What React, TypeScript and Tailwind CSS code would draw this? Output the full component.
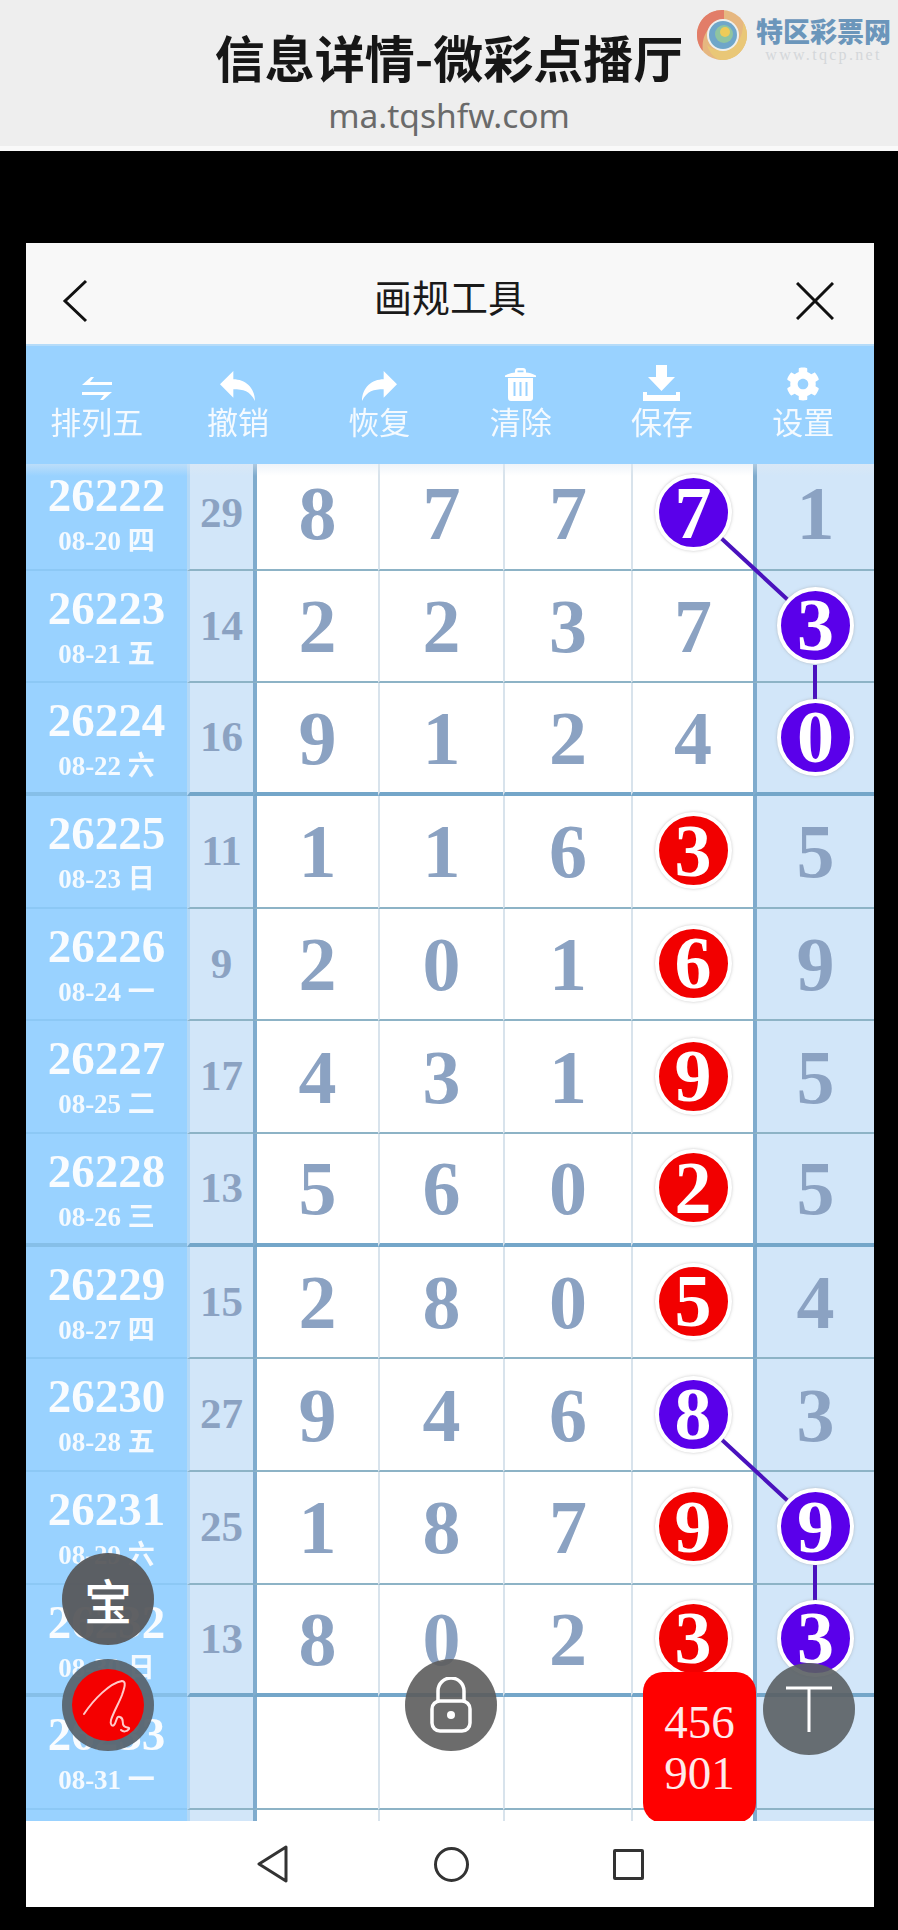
import { FaCog } from "react-icons/fa";

type Tone = "red" | "purple";

type Draw = {
  issue: string;
  date: string;
  sum: string;
  nums: string[];
  marks?: Record<number, Tone>;
};

const serif = "font-['Liberation_Serif','Noto_Sans_CJK_SC',serif]";

const draws: Draw[] = [
  { issue: "26222", date: "08-20 四", sum: "29", nums: ["8", "7", "7", "7", "1"], marks: { 3: "purple" } },
  { issue: "26223", date: "08-21 五", sum: "14", nums: ["2", "2", "3", "7", "3"], marks: { 4: "purple" } },
  { issue: "26224", date: "08-22 六", sum: "16", nums: ["9", "1", "2", "4", "0"], marks: { 4: "purple" } },
  { issue: "26225", date: "08-23 日", sum: "11", nums: ["1", "1", "6", "3", "5"], marks: { 3: "red" } },
  { issue: "26226", date: "08-24 一", sum: "9", nums: ["2", "0", "1", "6", "9"], marks: { 3: "red" } },
  { issue: "26227", date: "08-25 二", sum: "17", nums: ["4", "3", "1", "9", "5"], marks: { 3: "red" } },
  { issue: "26228", date: "08-26 三", sum: "13", nums: ["5", "6", "0", "2", "5"], marks: { 3: "red" } },
  { issue: "26229", date: "08-27 四", sum: "15", nums: ["2", "8", "0", "5", "4"], marks: { 3: "red" } },
  { issue: "26230", date: "08-28 五", sum: "27", nums: ["9", "4", "6", "8", "3"], marks: { 3: "purple" } },
  { issue: "26231", date: "08-29 六", sum: "25", nums: ["1", "8", "7", "9", "9"], marks: { 3: "red", 4: "purple" } },
  { issue: "26232", date: "08-30 日", sum: "13", nums: ["8", "0", "2", "3", "3"], marks: { 3: "red", 4: "purple" } },
  { issue: "26233", date: "08-31 一", sum: "", nums: ["", "", "", "", ""] },
  { issue: "", date: "", sum: "", nums: ["", "", "", "", ""] },
];

// rows that close a group get a heavier rule
const heavyRows = [2, 6, 10];

function SwapIcon() {
  return (
    <svg width="30" height="25" viewBox="0 0 30 25" fill="currentColor">
      <path d="M0 9L9 1h3L8 6h22v3z" />
      <path d="M30 16l-9 8h-3l4-5H0v-3z" />
    </svg>
  );
}

function ReplyIcon({ flip }: { flip?: boolean }) {
  return (
    <svg width="35" height="30" viewBox="0 0 105 90" fill="currentColor" className={flip ? "-scale-x-100" : ""}>
      <path d="M0 40L40 0v25c35 0 65 25 65 65-15-30-35-35-65-35v25z" />
    </svg>
  );
}

function TrashIcon() {
  return (
    <svg width="31" height="33" viewBox="0 0 31 33" fill="currentColor">
      <path d="M0 7.500C4 5.500 7 5 10 4.600V3a3 3 0 0 1 3-3h5a3 3 0 0 1 3 3v1.600C24 5 27 5.500 31 7.500v1.500H0zM12.500 4.300h6V2.500h-6z" />
      <path d="M3 10h25v20a3 3 0 0 1-3 3H6a3 3 0 0 1-3-3z" />
      <path d="M9.500 14v14M15.500 14v14M21.500 14v14" stroke="#99d2ff" strokeWidth="2" />
    </svg>
  );
}

function SaveIcon() {
  return (
    <svg width="37" height="36" viewBox="0 0 37 36" fill="currentColor">
      <path d="M13 0h11v12h8L18.500 26 5 12h8z" />
      <path d="M0 27h4v3h29v-3h4v9H0z" />
    </svg>
  );
}

const tools = [
  { label: "排列五", icon: <SwapIcon /> },
  { label: "撤销", icon: <ReplyIcon /> },
  { label: "恢复", icon: <ReplyIcon flip /> },
  { label: "清除", icon: <TrashIcon /> },
  { label: "保存", icon: <SaveIcon /> },
  { label: "设置", icon: <FaCog size={34} /> },
];

function Swirl() {
  return (
    <svg width="52" height="52" viewBox="0 0 52 52" className="blur-[0.7px]">
      <circle cx="26" cy="26" r="25" fill="#e6b780" />
      <path d="M28 1C12 0 1 12 1 26c0 6 2 12 6 16-2-14 5-28 21-30z" fill="#e27d68" />
      <path d="M25 51c14 1 26-11 26-25 0-5-2-10-4-13 1 15-7 27-22 28-6 0-11-2-14-5 3 9 8 14 14 15z" fill="#e9c777" />
      <circle cx="27" cy="26" r="16" fill="#eef0ee" />
      <circle cx="27" cy="26" r="14" fill="#6fa6c9" />
      <circle cx="28" cy="25" r="9" fill="#8fc4a0" />
      <circle cx="29" cy="23" r="5" fill="#eecb58" />
    </svg>
  );
}

function Ball({ value, tone }: { value: string; tone: Tone }) {
  const bg = tone === "red" ? "bg-[#f20000]" : "bg-[#5a00ea]";
  return (
    <div
      className={`relative z-10 -mt-[1px] flex h-[77px] w-[77px] items-center justify-center rounded-full border-4 border-white text-[74px] font-bold leading-none text-white shadow-[0_0_3px_rgba(140,140,140,0.5)] ${bg}`}
    >
      {value}
    </div>
  );
}

function Row({ draw, heavy }: { draw: Draw; heavy: boolean }) {
  const rule = heavy ? "border-b-4 border-b-[#74a6c9]" : "border-b-2 border-b-[#8db3c6]";
  return (
    <div className={`grid h-[112.67px] grid-cols-[161px_66px_125px_125px_128px_122px_121px] ${serif}`}>
      <div
        className={`flex flex-col items-center bg-[#99d2ff] pt-[17px] text-white ${
          heavy ? "border-b-4 border-b-[#86bfe8]" : "border-b-2 border-b-[#8cc8f5]"
        }`}
      >
        <div className="text-[47px] font-bold leading-[40px] opacity-95">{draw.issue}</div>
        <div className="mt-[10px] text-[27px] font-bold leading-[32px] opacity-90">{draw.date}</div>
      </div>
      <div
        className={`flex items-center justify-center border-l-[3px] border-l-[#b3d8f6] bg-[#d2e6f9] text-[43px] font-bold text-[#8ba2c2] ${rule}`}
      >
        {draw.sum}
      </div>
      {draw.nums.map((n, i) => {
        const tone = draw.marks?.[i];
        return (
          <div
            key={i}
            className={`flex items-center justify-center text-[76px] font-bold leading-none text-[#8ba2c2] ${rule} ${
              i === 4 ? "border-l-4 border-l-[#7fabcd] bg-[#d2e6f9]" : "bg-white"
            } ${i === 0 ? "border-l-4 border-l-[#7fabcd]" : ""} ${
              i > 0 && i < 4 ? "border-l-2 border-l-[#d8e3ec]" : ""
            }`}
          >
            {tone ? <Ball value={n} tone={tone} /> : n}
          </div>
        );
      })}
    </div>
  );
}

function SignatureMark() {
  return (
    <svg width="72" height="72" viewBox="0 0 72 72" fill="none" stroke="#ffc9c9" strokeWidth="2" strokeLinecap="round" strokeLinejoin="round">
      <path d="M12 45C22 30 38 14 50 12c5 0 2 8 0 14-3 8-8 16-11 25-1 4 1 7 3 5 3-3 2-10 6-8 5 2 1 6 4 9 2 2 6 1 5 3-2 3-6 3-8 1" />
    </svg>
  );
}

export default function App() {
  return (
    <div className="relative h-[1930px] w-[898px] overflow-hidden bg-black">
      {/* page caption */}
      <div className="relative h-[151px] border-b-[5px] border-b-[#f9f9f9] bg-[#eeeeee] text-center">
        <div className="mx-auto w-fit pt-[24px] font-['Noto_Sans_CJK_SC',sans-serif] text-[50px] font-bold leading-[64px] text-[#161616]">
          信息详情-微彩点播厅
        </div>
        <div className="pt-[2px] font-['Noto_Sans',sans-serif] text-[33.500px] leading-[50px] text-[#6a6a6a]">ma.tqshfw.com</div>

        <div className="absolute left-[696px] top-[9px] flex gap-[8px]">
          <Swirl />
          <div className="pt-[8px]">
            <div className="font-['Noto_Sans_CJK_SC',sans-serif] text-[27px] font-black leading-[28px] text-[#6b96bb]">
              特区彩票网
            </div>
            <div className="mt-[2px] font-['Liberation_Serif',serif] text-[16px] leading-[16px] tracking-[2.3px] text-[#d4d7da]">
              www.tqcp.net
            </div>
          </div>
        </div>
      </div>

      {/* tool window */}
      <div className="ml-[26px] mt-[92px] flex h-[1664px] w-[848px] flex-col bg-white">
        <div className="flex h-[101px] items-center bg-[#f8f8f8] pl-[36px] pr-[40px]">
          <div className="w-[38px]">
            <svg width="26" height="44" viewBox="0 0 26 44" fill="none" stroke="#111" strokeWidth="3" className="mt-[14px]">
              <path d="M24 2L3 22l21 20" />
            </svg>
          </div>
          <div className="ml-[4px] mt-[4px] flex-1 text-center font-['Noto_Sans_CJK_SC',sans-serif] text-[38px] leading-[50px] text-[#1a1a1a]">
            画规工具
          </div>
          <svg width="38" height="38" viewBox="0 0 38 38" fill="none" stroke="#111" strokeWidth="3" className="mt-[14px]">
            <path d="M1 1l36 36M37 1L1 37" />
          </svg>
        </div>

        <div className="grid h-[120px] grid-cols-6 border-t-2 border-t-[#b6dcf9] bg-[#99d2ff] font-['Noto_Sans_CJK_SC',sans-serif] text-white">
          {tools.map((t) => (
            <div key={t.label} className="flex flex-col items-center">
              <div className="flex h-[55px] items-end justify-center">{t.icon}</div>
              <div className="text-[31px] leading-[40px] opacity-90">{t.label}</div>
            </div>
          ))}
        </div>

        <div className="relative h-[1357px] overflow-hidden">
          <div className="-mt-[6px]">
            {draws.map((d, i) => (
              <Row key={d.issue || i} draw={d} heavy={heavyRows.includes(i)} />
            ))}
          </div>
          <div className="pointer-events-none absolute inset-x-0 top-0 h-[12px] bg-gradient-to-b from-[#dfe9f3]/50 to-transparent" />

          {/* links between consecutive purple balls */}
          <svg width="848" height="1357" className="absolute left-0 top-0" fill="none" stroke="#4a12bd" strokeWidth="4">
            <path d="M695 74L762 136M789 201V237" />
            <path d="M695 975L762 1037M789 1101V1137" />
          </svg>

          <div className="absolute left-[617px] top-[1208px] z-20 flex h-[151px] w-[113px] flex-col items-center justify-center rounded-[20px] bg-[#ff0000] font-['Liberation_Serif',serif] text-[47px] leading-[51px] text-[#ffeaea]">
            <span>456</span>
            <span>901</span>
          </div>
        </div>

        <div className="flex flex-1 items-center bg-white pl-[231px]">
          <svg width="32" height="38" viewBox="0 0 32 38" fill="none" stroke="#333" strokeWidth="3" strokeLinejoin="round">
            <path d="M29 2L2 19l27 17z" />
          </svg>
          <div className="ml-[145px] h-[35px] w-[35px] rounded-full border-[3px] border-[#333]" />
          <div className="ml-[144px] h-[31px] w-[31px] rounded-[2px] border-[3px] border-[#333]" />
        </div>
      </div>

      {/* floating buttons */}
      <div className="absolute left-[62px] top-[1553px] z-30 flex h-[92px] w-[92px] items-center justify-center rounded-full bg-[#57595c]/95 font-['Noto_Sans_CJK_SC',sans-serif] text-[48px] font-medium text-white">
        宝
      </div>
      <div className="absolute left-[62px] top-[1659px] z-30 flex h-[92px] w-[92px] items-center justify-center rounded-full bg-[#586570]/95">
        <div className="flex h-[72px] w-[72px] items-center justify-center rounded-full bg-[#f40000]">
          <SignatureMark />
        </div>
      </div>
      <div className="absolute left-[405px] top-[1659px] z-30 flex h-[92px] w-[92px] items-center justify-center rounded-full bg-[#5c5c5c]/90">
        <svg width="44" height="56" viewBox="0 0 44 56" fill="none" stroke="#fff" strokeWidth="3.500">
          <path d="M9 24V14a13 13 0 0 1 26 0v10" />
          <rect x="3" y="24" width="38" height="30" rx="8" />
          <circle cx="22" cy="38" r="4" fill="#fff" stroke="none" />
        </svg>
      </div>
      <div className="absolute left-[763px] top-[1663px] z-30 flex h-[92px] w-[92px] items-center justify-center rounded-full bg-[#5a5f63]/90">
        <svg width="48" height="48" viewBox="0 0 48 48" fill="none" stroke="#fff" strokeWidth="3">
          <path d="M1 3h46M24 3v44" />
        </svg>
      </div>
    </div>
  );
}
